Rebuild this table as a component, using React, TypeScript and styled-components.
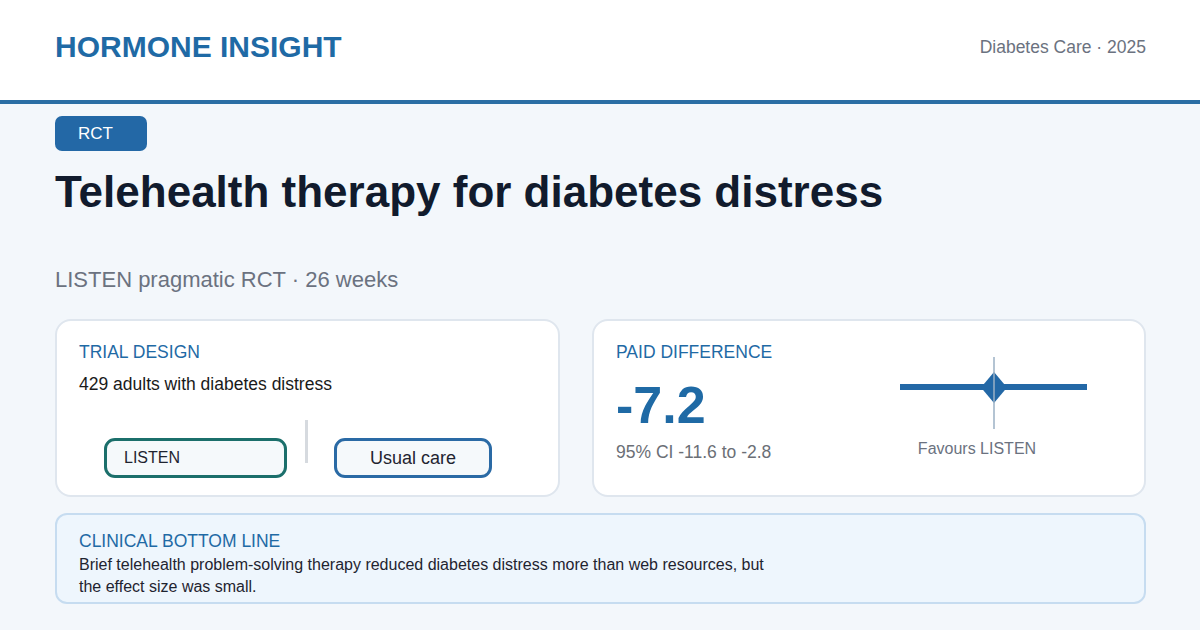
import styled, { createGlobalStyle } from "styled-components";

const GlobalStyle = createGlobalStyle`
    html, body {
        margin: 0;
        padding: 0;
        background: #f3f7fb;
        font-family: "Liberation Sans", Arial, sans-serif;
    }
    * {
        box-sizing: border-box;
    }
`;

const App = () => {
    return (
        <Page>
            <GlobalStyle />
            <Header>
                <Brand>HORMONE INSIGHT</Brand>
                <Source>Diabetes Care · 2025</Source>
            </Header>
            <Main>
                <Tag>RCT</Tag>
                <Title>Telehealth therapy for diabetes distress</Title>
                <Subtitle>LISTEN pragmatic RCT · 26 weeks</Subtitle>
                <Cards>
                    <Card>
                        <Label>TRIAL DESIGN</Label>
                        <Body>429 adults with diabetes distress</Body>
                        <Arms>
                            <Arm tone="#1b6f6b" size={16} align="left">
                                LISTEN
                            </Arm>
                            <Divider />
                            <Arm tone="#2a6aa5" size={18} align="center">
                                Usual care
                            </Arm>
                        </Arms>
                    </Card>
                    <Card>
                        <ResultRow>
                            <Stats>
                                <Label>PAID DIFFERENCE</Label>
                                <BigNumber>-7.2</BigNumber>
                                <Interval>95% CI -11.6 to -2.8</Interval>
                            </Stats>
                            <Plot>
                                <svg width="220" height="72" viewBox="0 0 220 72">
                                    <line x1="33" y1="30" x2="220" y2="30" stroke="#2368a6" strokeWidth="6" />
                                    <polygon points="127,15 140,30.5 127,46 114,30.5" fill="#2368a6" />
                                    <line x1="127" y1="0" x2="127" y2="72" stroke="#9bb0c4" strokeWidth="1.5" />
                                </svg>
                                <Caption>Favours LISTEN</Caption>
                            </Plot>
                        </ResultRow>
                    </Card>
                </Cards>
                <BottomLine>
                    <Label>CLINICAL BOTTOM LINE</Label>
                    <Summary>
                        Brief telehealth problem-solving therapy reduced diabetes distress more than web resources, but
                        the effect size was small.
                    </Summary>
                </BottomLine>
            </Main>
        </Page>
    );
};

const Page = styled.div`
    width: 1200px;
    height: 630px;
    overflow: hidden;
    background: #f3f7fb;
`;

const Header = styled.header`
    height: 104px;
    background: #ffffff;
    border-bottom: 4px solid #2a6ea4;
    display: flex;
    align-items: center;
    justify-content: space-between;
    padding: 0 54px 6px 55px;
`;

const Brand = styled.div`
    font-size: 30px;
    font-weight: 700;
    color: #1f6aa5;
`;

const Source = styled.div`
    font-size: 17.5px;
    color: #6b7280;
`;

const Main = styled.main`
    padding: 12px 54px 0 55px;
    display: flex;
    flex-direction: column;
    align-items: flex-start;
`;

const Tag = styled.div`
    width: 92px;
    height: 35px;
    border-radius: 7px;
    background: #2368a6;
    color: #ffffff;
    font-size: 17px;
    line-height: 35px;
    padding-left: 23px;
`;

const Title = styled.h1`
    margin: 14px 0 0;
    font-size: 44px;
    line-height: 53px;
    font-weight: 700;
    color: #111b2d;
`;

const Subtitle = styled.div`
    margin-top: 48px;
    font-size: 22px;
    line-height: 28px;
    color: #6b7280;
`;

const Cards = styled.div`
    margin-top: 25px;
    width: 100%;
    display: grid;
    grid-template-columns: 505px 1fr;
    gap: 32px;
`;

const Card = styled.section`
    background: #ffffff;
    border: 2px solid #dfe6ee;
    border-radius: 16px;
    padding: 20px 22px 17px;
`;

const Label = styled.div`
    font-size: 17.5px;
    line-height: 22px;
    color: #1f6aa5;
`;

const Body = styled.div`
    margin-top: 10px;
    font-size: 17.5px;
    line-height: 22px;
    color: #1a1a1a;
`;

const Arms = styled.div`
    margin-top: 25px;
    padding-left: 25px;
    display: flex;
    align-items: flex-end;
    height: 58px;
`;

const Arm = styled.div<{ tone: string; size: number; align: "left" | "center" }>`
    height: 40px;
    border: 3px solid ${(props) => props.tone};
    border-radius: 11px;
    background: #f5f9fb;
    color: #1f2430;
    font-size: ${(props) => props.size}px;
    line-height: 34px;
    text-align: ${(props) => props.align};
    padding-left: ${(props) => (props.align === "left" ? "17px" : "0")};
    width: ${(props) => (props.align === "left" ? "183px" : "158px")};
`;

const Divider = styled.div`
    align-self: flex-start;
    width: 3px;
    height: 43px;
    background: #d6dadf;
    margin: 0 26px 0 18px;
`;

const ResultRow = styled.div`
    display: flex;
    justify-content: space-between;
`;

const Stats = styled.div`
    display: flex;
    flex-direction: column;
`;

const BigNumber = styled.div`
    margin-top: 16px;
    font-size: 52px;
    line-height: 52px;
    font-weight: 700;
    color: #1f6aa5;
`;

const Interval = styled.div`
    margin-top: 10px;
    font-size: 17.5px;
    line-height: 22px;
    color: #6b6f76;
`;

const Plot = styled.div`
    margin: 16px 35px 0 0;
    width: 220px;
    display: flex;
    flex-direction: column;
    align-items: center;
    svg {
        display: block;
    }
`;

const Caption = styled.div`
    margin-top: 9px;
    font-size: 16px;
    line-height: 22px;
    color: #6b7280;
`;

const BottomLine = styled.section`
    margin-top: 16px;
    width: 100%;
    height: 91px;
    background: #eef6fd;
    border: 2px solid #c6dcf0;
    border-radius: 12px;
    padding: 15px 22px 4px;
`;

const Summary = styled.div`
    margin-top: 2px;
    max-width: 700px;
    font-size: 16px;
    line-height: 22px;
    color: #1f2430;
`;

export default App;
